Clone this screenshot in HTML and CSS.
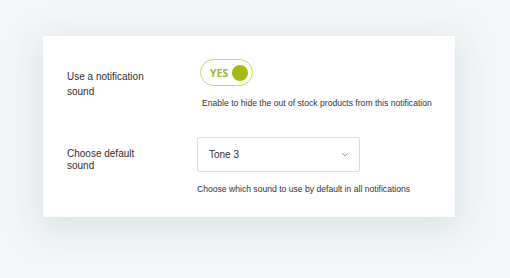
FILE: index.html
```html
<!DOCTYPE html>
<html lang="en">
<head>
    <meta charset="UTF-8">
    <title>Notification settings</title>
    <link rel="stylesheet" href="styles.css">
</head>
<body>

<div class="card">
    <!-- Sound on/off -->
    <div class="row row-toggle">
        <div class="label">Use a notification<br>sound</div>
        <div class="field">
            <button class="toggle" type="button">
                <span class="toggle-text">YES</span>
                <span class="knob"></span>
            </button>
            <p class="hint hint-toggle">Enable to hide the out of stock products from this notification</p>
        </div>
    </div>

    <!-- Default tone -->
    <div class="row row-select">
        <div class="label">Choose default<br>sound</div>
        <div class="field">
            <div class="select">
                <span>Tone 3</span>
                <svg width="8" height="5" viewBox="0 0 8 5"><path d="M1 1 L4 4 L7 1" fill="none" stroke="#9a9a9a" stroke-width="1"/></svg>
            </div>
            <p class="hint">Choose which sound to use by default in all notifications</p>
        </div>
    </div>
</div>

</body>
</html>
```

FILE: styles.css
```css
body {
    margin: 0;
    padding: 36px 0 0 43px;
    background-color: #f4f6f7;
    font-family: "Liberation Sans", Arial, sans-serif;
    color: #2b2b2b;
    height: 278px;
    box-sizing: border-box;
}

.card {
    width: 412px;
    height: 181px;
    box-sizing: border-box;
    background-color: #fff;
    box-shadow: 0 8px 30px 6px rgba(190, 210, 215, 0.45);
    padding: 23px 0 0 24px;
}

.row {
    display: flex;
}

.label {
    width: 130px;
    font-size: 10px;
    line-height: 15px;
    color: #2e2e2e;
}

.row-toggle .label {
    padding-top: 10px;
}

.row-select {
    margin-top: 29px;
}

.row-select .label {
    padding-top: 11px;
    line-height: 12px;
}

.toggle {
    display: flex;
    align-items: center;
    width: 53px;
    height: 27px;
    box-sizing: border-box;
    border: 1px solid #c7d56b;
    border-radius: 14px;
    background: #fff;
    padding: 0 4px 0 9px;
    margin-left: 3px;
    cursor: pointer;
}

.toggle-text {
    font-family: "Open Sans", sans-serif;
    font-size: 10.5px;
    font-weight: 700;
    color: #a0b62a;
}

.knob {
    width: 16px;
    height: 16px;
    border-radius: 50%;
    background-color: #a5bc0c;
    margin-left: auto;
}

.hint {
    margin: 0;
    font-size: 8.6px;
    color: #333;
}

.hint-toggle {
    margin: 12px 0 0 5px;
}

.select {
    display: flex;
    align-items: center;
    justify-content: space-between;
    width: 163px;
    height: 35px;
    box-sizing: border-box;
    border: 1px solid #dedede;
    border-radius: 2px;
    padding: 0 10px 0 11px;
    font-size: 10px;
    color: #2e2e2e;
    margin-bottom: 12px;
}
```
